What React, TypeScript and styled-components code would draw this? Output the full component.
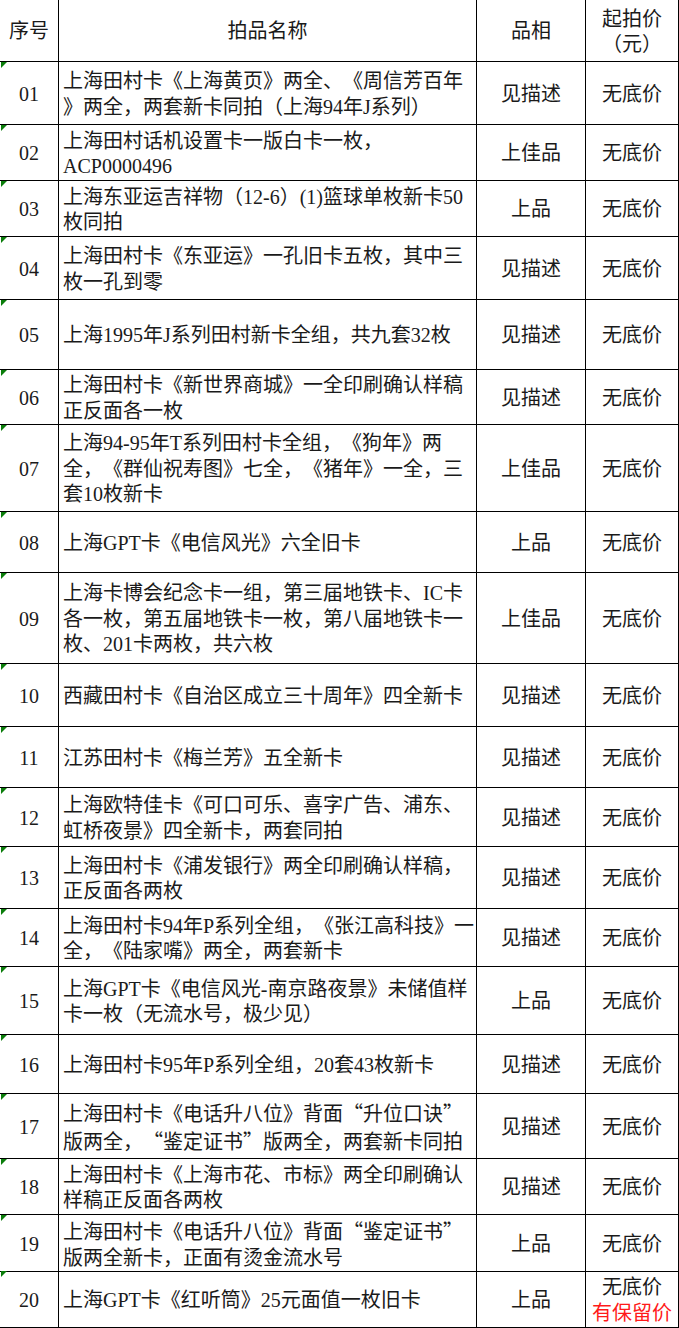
import * as React from 'react';
import styled, {createGlobalStyle} from 'styled-components';

type Lot = {
  no: string;
  lines: string[];
  grade: string;
  height: number;
  reserve?: boolean;
};

const LOTS: Lot[] = [
  {no: '01', lines: ['上海田村卡《上海黄页》两全、《周信芳百年', '》两全，两套新卡同拍（上海94年J系列）'], grade: '见描述', height: 63},
  {no: '02', lines: ['上海田村话机设置卡一版白卡一枚，', 'ACP0000496'], grade: '上佳品', height: 56},
  {no: '03', lines: ['上海东亚运吉祥物（12-6）(1)篮球单枚新卡50', '枚同拍'], grade: '上品', height: 56},
  {no: '04', lines: ['上海田村卡《东亚运》一孔旧卡五枚，其中三', '枚一孔到零'], grade: '见描述', height: 63},
  {no: '05', lines: ['上海1995年J系列田村新卡全组，共九套32枚'], grade: '见描述', height: 70},
  {no: '06', lines: ['上海田村卡《新世界商城》一全印刷确认样稿', '正反面各一枚'], grade: '见描述', height: 55},
  {
    no: '07',
    lines: ['上海94-95年T系列田村卡全组，《狗年》两', '全，《群仙祝寿图》七全，《猪年》一全，三', '套10枚新卡'],
    grade: '上佳品',
    height: 87,
  },
  {no: '08', lines: ['上海GPT卡《电信风光》六全旧卡'], grade: '上品', height: 61},
  {
    no: '09',
    lines: ['上海卡博会纪念卡一组，第三届地铁卡、IC卡', '各一枚，第五届地铁卡一枚，第八届地铁卡一', '枚、201卡两枚，共六枚'],
    grade: '上佳品',
    height: 91,
  },
  {no: '10', lines: ['西藏田村卡《自治区成立三十周年》四全新卡'], grade: '见描述', height: 63},
  {no: '11', lines: ['江苏田村卡《梅兰芳》五全新卡'], grade: '见描述', height: 61},
  {no: '12', lines: ['上海欧特佳卡《可口可乐、喜字广告、浦东、', '虹桥夜景》四全新卡，两套同拍'], grade: '见描述', height: 59},
  {no: '13', lines: ['上海田村卡《浦发银行》两全印刷确认样稿，', '正反面各两枚'], grade: '见描述', height: 62},
  {no: '14', lines: ['上海田村卡94年P系列全组，《张江高科技》一', '全，《陆家嘴》两全，两套新卡'], grade: '见描述', height: 58},
  {no: '15', lines: ['上海GPT卡《电信风光-南京路夜景》未储值样', '卡一枚（无流水号，极少见）'], grade: '上品', height: 68},
  {no: '16', lines: ['上海田村卡95年P系列全组，20套43枚新卡'], grade: '见描述', height: 59},
  {no: '17', lines: ['上海田村卡《电话升八位》背面“升位口诀”', '版两全，“鉴定证书”版两全，两套新卡同拍'], grade: '见描述', height: 65},
  {no: '18', lines: ['上海田村卡《上海市花、市标》两全印刷确认', '样稿正反面各两枚'], grade: '见描述', height: 56},
  {no: '19', lines: ['上海田村卡《电话升八位》背面“鉴定证书”', '版两全新卡，正面有烫金流水号'], grade: '上品', height: 56},
  {no: '20', lines: ['上海GPT卡《红听筒》25元面值一枚旧卡'], grade: '上品', height: 57, reserve: true},
];

const GlobalStyle = createGlobalStyle`
  html, body {
    margin: 0;
    padding: 0;
    background: #fff;
  }
  body {
    font-family: "Liberation Serif", "Noto Sans CJK SC", serif;
    font-size: 20px;
    color: #1a1a1a;
    text-spacing-trim: space-all;
  }
`;

// quotes need the full-width CJK glyphs, not the latin ones
const withQuotes = (text: string) =>
  text.split(/([“”])/).map((part, i) => (part === '“' || part === '”' ? <Quote key={i}>{part}</Quote> : part));

const App = () => {
  return (
    <>
      <GlobalStyle />
      <Sheet>
        <Row height={62}>
          <Cell>序号</Cell>
          <Cell>拍品名称</Cell>
          <Cell>品相</Cell>
          <Cell>
            <Line>起拍价</Line>
            <Line>（元）</Line>
          </Cell>
        </Row>
        {LOTS.map(lot => (
          <Row key={lot.no} height={lot.height}>
            <NumberCell>{lot.no}</NumberCell>
            <NameCell>
              {lot.lines.map((line, i) => (
                <Line key={i}>{withQuotes(line)}</Line>
              ))}
            </NameCell>
            <Cell>{lot.grade}</Cell>
            <Cell>
              <Line>无底价</Line>
              {lot.reserve && <Reserve>有保留价</Reserve>}
            </Cell>
          </Row>
        ))}
      </Sheet>
    </>
  );
};

const Sheet = styled.div`
  width: 679px;
  display: flex;
  flex-direction: column;
`;

const Row = styled.div<{height: number}>`
  display: grid;
  grid-template-columns: 59px 418px 109px 93px;
  height: ${props => props.height}px;
`;

const Cell = styled.div`
  position: relative;
  box-sizing: border-box;
  display: flex;
  flex-direction: column;
  align-items: center;
  justify-content: center;
  padding-top: 3px;
  border-right: 1px solid #000;
  border-bottom: 1px solid #000;
  line-height: 25.5px;
  white-space: nowrap;
`;

const NumberCell = styled(Cell)`
  &::before {
    content: '';
    position: absolute;
    top: 0;
    left: 1px;
    width: 0;
    height: 0;
    border-top: 6px solid #0a7d0a;
    border-right: 6px solid transparent;
  }
`;

const NameCell = styled(Cell)`
  align-items: flex-start;
  padding-left: 4px;
`;

const Line = styled.div``;

const Quote = styled.span`
  font-family: "Noto Sans CJK SC", sans-serif;
`;

const Reserve = styled.div`
  color: #ff1a1a;
  line-height: 25px;
`;

export default App;
